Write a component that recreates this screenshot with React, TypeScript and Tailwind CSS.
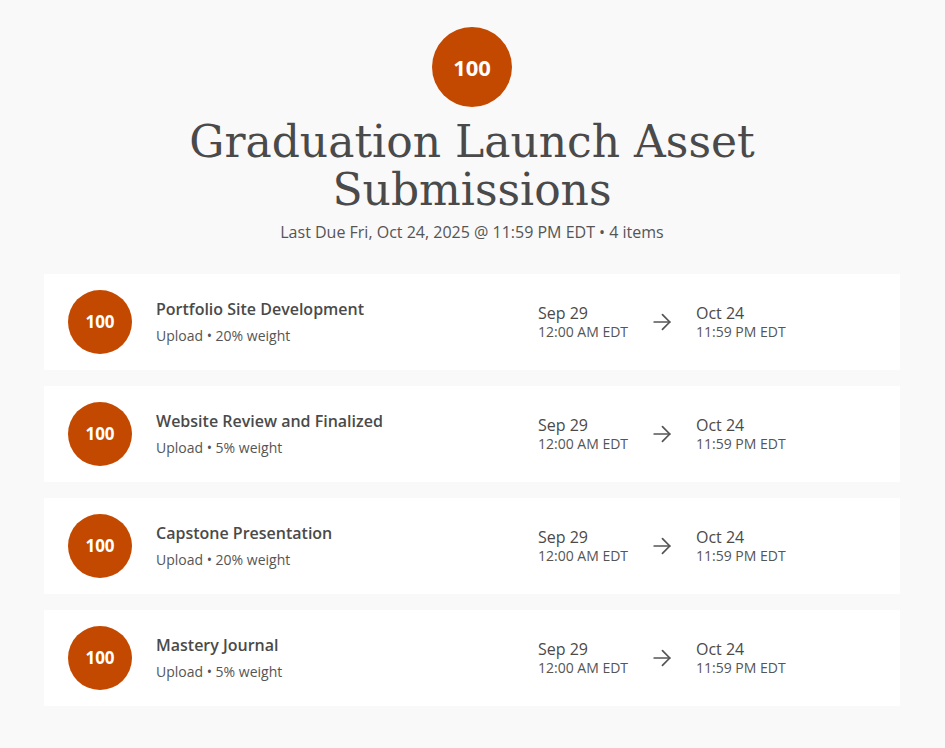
import React from "react";

const items = [
  { title: "Portfolio Site Development", weight: "20%" },
  { title: "Website Review and Finalized", weight: "5%" },
  { title: "Capstone Presentation", weight: "20%" },
  { title: "Mastery Journal", weight: "5%" },
];

function Arrow() {
  return (
    <svg width="22" height="22" viewBox="0 0 24 24" fill="none" stroke="#555555" strokeWidth="1.9" strokeLinecap="round" strokeLinejoin="round">
      <path d="M3.5 12h17" />
      <path d="M12.5 4l8 8-8 8" />
    </svg>
  );
}

export default function App() {
  return (
    <div className="min-h-[748px] bg-[#f9f9f9] flex flex-col items-center pt-[27px] pr-px text-[#4a4a4a]" style={{ fontFamily: '"Open Sans", sans-serif' }}>
      <div className="w-20 h-20 rounded-full bg-[#c44900] flex items-center justify-center text-white font-bold text-[22px]">100</div>
      <h1 className="mt-[11px] text-center text-[44px] leading-[48px] text-[#4a4a4a] w-[600px]" style={{ fontFamily: '"DejaVu Serif", serif', fontWeight: 300 }}>
        Graduation Launch Asset Submissions
      </h1>
      <div className="mt-[7px] text-[16px] leading-[22px] text-[#555555]">Last Due Fri, Oct 24, 2025 @ 11:59 PM EDT • 4 items</div>
      <div className="mt-[31px] w-[856px] flex flex-col gap-4">
        {items.map((it) => (
          <div key={it.title} className="bg-white h-[96px] flex items-center pl-6">
            <div className="w-16 h-16 rounded-full bg-[#c44900] flex items-center justify-center text-white font-bold text-[17px] shrink-0">100</div>
            <div className="ml-6 w-[382px] flex flex-col -mt-px">
              <div className="text-[16px] leading-[22px] font-semibold text-[#4a4a4a]">{it.title}</div>
              <div className="mt-[6px] text-[14px] leading-[20px] text-[#555555]">Upload • {it.weight} weight</div>
            </div>
            <div className="w-[114px] flex flex-col">
              <div className="text-[16px] leading-[20px]">Sep 29</div>
              <div className="text-[14px] leading-[18px] text-[#555555]">12:00 AM EDT</div>
            </div>
            <div className="w-[44px] flex items-center -ml-px">
              <Arrow />
            </div>
            <div className="flex flex-col ml-px">
              <div className="text-[16px] leading-[20px]">Oct 24</div>
              <div className="text-[14px] leading-[18px] text-[#555555]">11:59 PM EDT</div>
            </div>
          </div>
        ))}
      </div>
    </div>
  );
}
